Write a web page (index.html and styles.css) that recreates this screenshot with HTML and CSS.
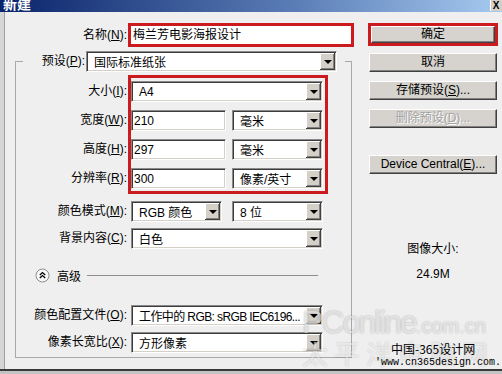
FILE: index.html
```html
<!DOCTYPE html>
<html lang="zh-CN">
<head>
    <meta charset="UTF-8">
    <title>新建</title>
    <link rel="stylesheet" href="styles.css">
</head>
<body>
    <div class="titlebar">
        <span class="title">新建</span>
        <span class="close">X</span>
    </div>
    <div class="window">
        <div class="dialog">
            <div class="main">
                <div class="name-row">
                    <span class="lbl">名称(<u>N</u>):</span>
                    <div class="name-field">梅兰芳电影海报设计</div>
                </div>

                <fieldset class="group">
                    <legend class="preset">
                        <span class="lbl">预设(<u>P</u>):</span>
                        <div class="field select preset-select"><span>国际标准纸张</span><i class="arrow"></i></div>
                    </legend>

                    <div class="size-block">
                        <div class="size-labels">
                            <span class="lbl">大小(<u>I</u>):</span>
                            <span class="lbl">宽度(<u>W</u>):</span>
                            <span class="lbl">高度(<u>H</u>):</span>
                            <span class="lbl">分辨率(<u>R</u>):</span>
                        </div>
                        <div class="highlight">
                            <div class="field select full"><span>A4</span><i class="arrow"></i></div>
                            <div class="pair">
                                <div class="field input">210</div>
                                <div class="field select unit"><span>毫米</span><i class="arrow"></i></div>
                            </div>
                            <div class="pair">
                                <div class="field input">297</div>
                                <div class="field select unit"><span>毫米</span><i class="arrow"></i></div>
                            </div>
                            <div class="pair">
                                <div class="field input">300</div>
                                <div class="field select unit"><span>像素/英寸</span><i class="arrow"></i></div>
                            </div>
                        </div>
                    </div>

                    <div class="row mode-row">
                        <span class="lbl">颜色模式(<u>M</u>):</span>
                        <div class="pair">
                            <div class="field select unit"><span>RGB 颜色</span><i class="arrow"></i></div>
                            <div class="field select unit"><span>8 位</span><i class="arrow"></i></div>
                        </div>
                    </div>
                    <div class="row bg-row">
                        <span class="lbl">背景内容(<u>C</u>):</span>
                        <div class="field select full"><span>白色</span><i class="arrow"></i></div>
                    </div>

                    <div class="advanced">
                        <svg class="toggle" width="15" height="15" viewBox="0 0 15 15">
                            <circle cx="7.5" cy="7.5" r="6.5" fill="#f8f8f8" stroke="#8c8c8c"/>
                            <path d="M4.8 7 L7.5 4.6 L10.2 7 M4.8 10 L7.5 7.6 L10.2 10" fill="none" stroke="#000" stroke-width="1.3"/>
                        </svg>
                        <span class="adv-text">高级</span>
                        <span class="adv-line"></span>
                    </div>

                    <div class="row profile-row">
                        <span class="lbl">颜色配置文件(<u>O</u>):</span>
                        <div class="field select full"><span>工作中的 RGB: sRGB IEC6196...</span><i class="arrow"></i></div>
                    </div>
                    <div class="row ratio-row">
                        <span class="lbl">像素长宽比(<u>X</u>):</span>
                        <div class="field select full"><span>方形像素</span><i class="arrow"></i></div>
                    </div>
                </fieldset>
            </div>

            <div class="side">
                <div class="ok-wrap"><button class="btn ok">确定</button></div>
                <button class="btn cancel">取消</button>
                <button class="btn save">存储预设(<u>S</u>)...</button>
                <button class="btn delete" disabled>删除预设(<u>D</u>)...</button>
                <button class="btn device">Device Central(<u>E</u>)...</button>
                <div class="size-title">图像大小:</div>
                <div class="size-value">24.9M</div>
            </div>
        </div>
    </div>

    <!-- watermark over the corner -->
    <div class="watermark">
        <div class="wm-logo">PConline<small>.com.cn</small></div>
        <div class="wm-cn">太平洋电脑网</div>
        <div class="wm-site">中国-365设计网</div>
        <div class="wm-url">'www.cn365design.com.</div>
    </div>
</body>
</html>
```

FILE: styles.css
```css
body {
    margin: 0;
    width: 502px;
    height: 374px;
    overflow: hidden;
    position: relative;
    background: #c4c4c4;
    font-family: "Liberation Sans", "Noto Sans CJK SC", sans-serif;
    font-size: 12px;
    color: #000;
}

.titlebar {
    height: 12px;
    display: flex;
    overflow: hidden;
    background: linear-gradient(to right, #0a246a, #5d7fb8 60%, #a6caf0);
}

.title {
    color: #fff;
    font-weight: bold;
    font-size: 14px;
    line-height: 14px;
    margin: -4px 0 0 3px;
    font-family: "Noto Sans CJK SC", sans-serif;
}

.close {
    margin-left: auto;
    width: 12px;
    height: 11px;
    background: #d4d0c8;
    font-size: 10px;
    font-weight: bold;
    line-height: 11px;
    text-align: center;
    box-shadow: inset 1px 0 #fff;
}

.window {
    height: 357px;
    background: #d6d6d6;
    padding-left: 4px;
    border-bottom: 2px solid #3a3a3a;
}

.dialog {
    display: flex;
    height: 100%;
    padding-top: 11px;
    box-sizing: border-box;
    background: #efefef;
    border-left: 1px solid #a0a0a0;
}

.main {
    width: 350px;
}

.lbl {
    text-align: right;
    white-space: nowrap;
    line-height: 21px;
}

.name-row {
    display: flex;
    align-items: center;
    height: 24px;
}

.name-row .lbl {
    width: 122px;
}

.name-field {
    margin-left: 1px;
    width: 226px;
    height: 24px;
    box-sizing: border-box;
    border: 3px solid #cc1b1f;
    background: #fff;
    padding-left: 2px;
    line-height: 18px;
}

/* sunken win-classic field */
.field {
    height: 21px;
    box-sizing: border-box;
    display: flex;
    align-items: center;
    background: #fff;
    border: 1px solid;
    border-color: #8a8a8a #fff #fff #8a8a8a;
    box-shadow: inset 1px 1px #3c3c3c, inset -1px -1px #d4d0c8;
    padding-left: 3px;
    white-space: nowrap;
    overflow: hidden;
}

.select span {
    flex: 1;
    overflow: hidden;
    padding-left: 4px;
}

.arrow {
    width: 15px;
    height: 17px;
    margin-right: 1px;
    flex-shrink: 0;
    background: #d4d0c8;
    box-shadow: inset -1px -1px #404040, inset 1px 1px #fff, inset -2px -2px #808080;
    display: flex;
    align-items: center;
    justify-content: center;
}

.arrow::after {
    content: "";
    border-top: 4px solid #000;
    border-left: 4px solid transparent;
    border-right: 4px solid transparent;
    margin-top: 1px;
}

.group {
    margin: 4px 0 0 10px;
    width: 337px;
    box-sizing: border-box;
    border: 1px solid #a8a8a8;
    padding: 3px 0 4px 0;
    min-width: 0;
}

.preset {
    display: flex;
    align-items: center;
    margin-left: 7px;
    padding: 0 8px 0 12px;
}

.preset .lbl {
    width: 50px;
}

.preset-select {
    margin-left: 1px;
    width: 251px;
}

.size-block {
    display: flex;
}

.size-labels {
    width: 111px;
    padding-top: 6px;
    display: flex;
    flex-direction: column;
    gap: 8px;
}

.highlight {
    margin-left: 1px;
    width: 200px;
    box-sizing: border-box;
    border: 3px solid #cc1b1f;
    padding: 3px 2px 2px 0;
    display: flex;
    flex-direction: column;
    gap: 8px;
}

.full {
    width: 192px;
}

.pair {
    display: flex;
    gap: 6px;
}

.input {
    width: 95px;
    padding-left: 2px;
}

.unit {
    width: 91px;
}

.mode-row .pair {
    gap: 10px;
}

.row {
    display: flex;
    align-items: center;
}

.row .lbl {
    width: 111px;
    margin-right: 4px;
}

.mode-row {
    margin-top: 7px;
}

.bg-row {
    margin-top: 6px;
}

.advanced {
    display: flex;
    align-items: center;
    height: 16px;
    margin-top: 18px;
    padding-left: 19px;
}

.adv-text {
    margin-left: 7px;
    font-family: "Noto Sans CJK SC", sans-serif;
}

.adv-line {
    margin-left: 6px;
    width: 231px;
    border-top: 1px solid #8e8e8e;
}

.profile-row {
    margin-top: 22px;
}

.profile-row .select span {
    letter-spacing: -0.6px;
}

.ratio-row {
    margin-top: 6px;
}

.side {
    width: 130px;
    margin-left: 13px;
    display: flex;
    flex-direction: column;
}

.btn {
    height: 19px;
    margin: 0 1px;
    padding: 0;
    font: inherit;
    color: #000;
    background: #d6d3ce;
    border: 1px solid;
    border-color: #fff #404040 #404040 #fff;
    box-shadow: inset -1px -1px #808080;
    text-align: center;
    line-height: 15px;
}

.ok-wrap {
    height: 23px;
    box-sizing: border-box;
    border: 3px solid #cc1b1f;
    display: flex;
}

.ok-wrap .ok {
    flex: 1;
    height: 17px;
    margin: 0;
}

.cancel {
    margin-top: 7px;
}

.save,
.delete {
    margin-top: 9px;
}

.delete {
    color: #a3a3a3;
    text-shadow: 1px 1px #fff;
}

.device {
    margin-top: 27px;
}

.size-title {
    margin-top: 68px;
    text-align: center;
    line-height: 14px;
}

.size-value {
    margin-top: 11px;
    text-align: center;
    line-height: 14px;
}

.watermark {
    position: absolute;
    left: 300px;
    top: 300px;
    width: 202px;
    height: 74px;
    overflow: hidden;
    pointer-events: none;
}

.wm-logo {
    position: absolute;
    left: 2px;
    top: 4px;
    font-family: "Liberation Sans", sans-serif;
    font-size: 32px;
    letter-spacing: -2px;
    line-height: 36px;
    white-space: nowrap;
    color: rgba(255, 255, 255, 0.6);
    text-shadow: 0 0 2px rgba(0, 0, 0, 0.3);
}

.wm-logo small {
    font-size: 20px;
    letter-spacing: 0;
}

.wm-cn {
    position: absolute;
    left: 2px;
    top: 38px;
    font-family: "Noto Sans CJK SC", sans-serif;
    font-size: 26px;
    letter-spacing: 6px;
    line-height: 30px;
    white-space: nowrap;
    color: rgba(255, 255, 255, 0.55);
    text-shadow: 0 0 2px rgba(0, 0, 0, 0.2);
}

.wm-site {
    position: absolute;
    left: 91px;
    top: 42px;
    font-family: "Noto Sans CJK SC", sans-serif;
    font-size: 12px;
    line-height: 14px;
    color: #000;
}

.wm-url {
    position: absolute;
    left: 75px;
    top: 57px;
    font-family: "Liberation Mono", monospace;
    font-size: 10px;
    line-height: 11px;
    white-space: nowrap;
    color: #000;
}
```
